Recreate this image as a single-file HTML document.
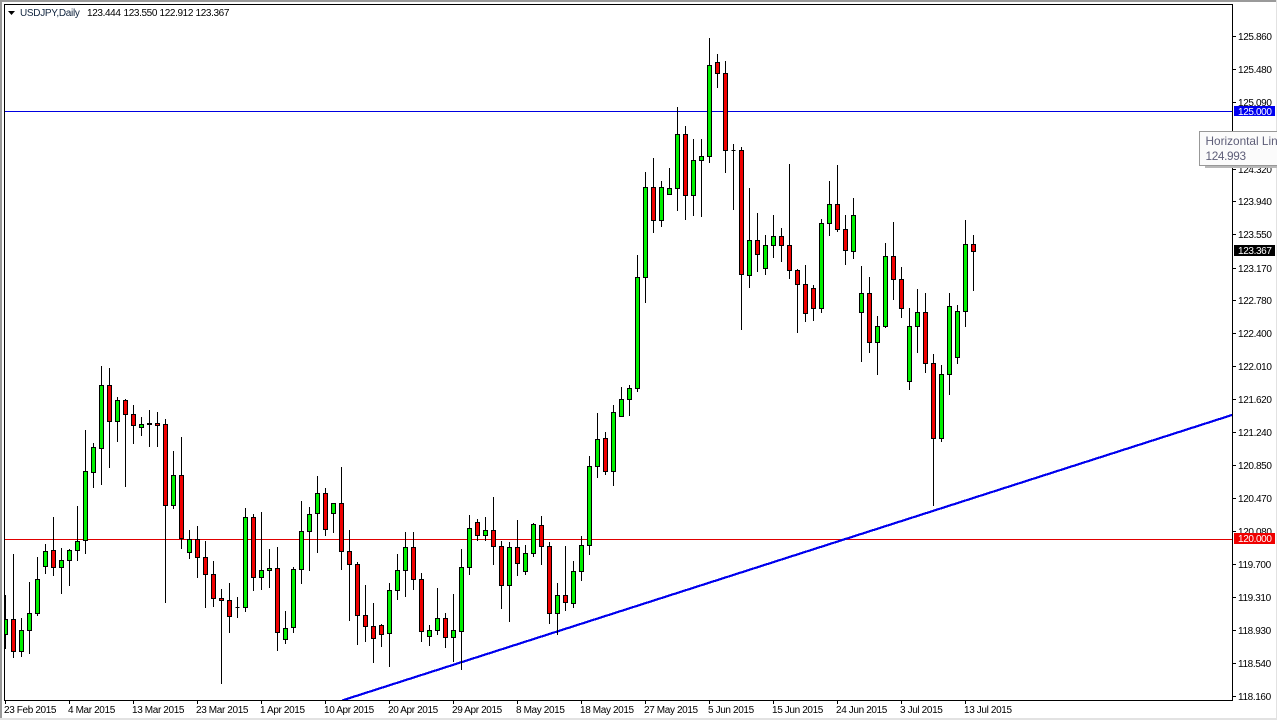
<!DOCTYPE html>
<html>
<head>
<meta charset="utf-8">
<title>USDJPY,Daily</title>
<style>
html,body{margin:0;padding:0;background:#fff;width:1277px;height:720px;overflow:hidden}
svg{display:block}
text{font-family:"Liberation Sans",sans-serif;font-size:10px;fill:#000;letter-spacing:-.37px}
</style>
</head>
<body>
<svg width="1277" height="720" viewBox="0 0 1277 720" xmlns="http://www.w3.org/2000/svg">
<rect width="1277" height="720" fill="#fff"/>
<rect x="0" y="0" width="1277" height="2" fill="#9a9a9a"/>
<rect x="0" y="0" width="2" height="720" fill="#9a9a9a"/>
<rect x="1276" y="0" width="1" height="720" fill="#e2e2e2"/>
<rect x="0" y="718" width="1277" height="2" fill="#e2e2e2"/>

<defs><clipPath id="c"><rect x="5" y="5" width="1227" height="695"/></clipPath></defs>
<g clip-path="url(#c)" shape-rendering="crispEdges">
<rect x="5" y="111" width="1227" height="1" fill="#0000e0"/>
<rect x="5" y="539" width="1227" height="1" fill="#e00000"/>
<path d="M342 700.5L1232 415" stroke="#0000ee" stroke-width="2.2" fill="none"/>
<path stroke="#000" stroke-width="1" fill="none" d="M5.5 595V649M13.5 554V658M21.5 618V657M29.5 582V654M37.5 557V616M45.5 544V574M53.5 517V576M61.5 548V594M69.5 549V586M77.5 506V561M85.5 430V554M93.5 443V488M101.5 366V485M109.5 368V468M117.5 397V442M125.5 399V487M133.5 405V444M141.5 417V436M149.5 410V447M157.5 412V447M165.5 419V603M173.5 451V509M181.5 437V549M189.5 530V559M197.5 526V578M205.5 541V608M213.5 561V607M221.5 589V684M229.5 583V633M237.5 597V618M245.5 508V612M253.5 514V591M261.5 512V590M269.5 549V588M277.5 547V651M285.5 611V644M293.5 567V633M301.5 501V584M309.5 507V571M317.5 476V553M325.5 488V536M333.5 503V533M341.5 467V570M349.5 530V621M357.5 562V645M365.5 585V642M373.5 603V663M381.5 624V647M389.5 583V667M397.5 554V600M405.5 532V597M413.5 532V590M421.5 573V642M429.5 625V646M437.5 588V635M445.5 613V648M453.5 594V662M461.5 549V670M469.5 515V575M477.5 519V541M485.5 517V541M493.5 497V565M501.5 541V609M509.5 542V622M517.5 520V576M525.5 545V575M533.5 523V557M541.5 516V565M549.5 542V624M557.5 583V635M565.5 546V611M573.5 561V608M581.5 536V581M589.5 456V555M597.5 413V478M605.5 432V475M613.5 405V486M621.5 387V416M629.5 385V416M637.5 255V392M645.5 172V303M653.5 158V233M661.5 181V227M669.5 168V195M677.5 107V211M685.5 126V220M693.5 139V216M701.5 139V217M709.5 38V163M717.5 54V88M725.5 61V173M733.5 144V210M741.5 147V330M749.5 188V288M757.5 213V272M765.5 235V275M773.5 215V258M781.5 228V262M789.5 164V279M797.5 269V333M805.5 265V322M813.5 285V321M821.5 219V313M829.5 181V236M837.5 165V232M845.5 215V265M853.5 198V259M861.5 266V362M869.5 277V353M877.5 316V375M885.5 243V328M893.5 222V300M901.5 267V318M909.5 308V390M917.5 289V353M925.5 293V373M933.5 354V506M941.5 365V442M949.5 293V395M957.5 305V364M965.5 220V327M973.5 235V291"/>
<path stroke="#000" stroke-width="1" fill="#00f000" d="M3.5 619.5h4V634.5h-4zM19.5 630.5h4V651.5h-4zM27.5 613.5h4V630.5h-4zM35.5 579.5h4V613.5h-4zM43.5 551.5h4V566.5h-4zM59.5 560.5h4V567.5h-4zM67.5 550.5h4V560.5h-4zM75.5 541.5h4V550.5h-4zM83.5 471.5h4V540.5h-4zM91.5 447.5h4V472.5h-4zM99.5 385.5h4V448.5h-4zM115.5 400.5h4V421.5h-4zM139.5 424.5h4V427.5h-4zM171.5 475.5h4V505.5h-4zM187.5 539.5h4V552.5h-4zM243.5 517.5h4V607.5h-4zM259.5 570.5h4V577.5h-4zM267.5 568.5h4V570.5h-4zM283.5 628.5h4V639.5h-4zM291.5 569.5h4V627.5h-4zM299.5 531.5h4V569.5h-4zM307.5 514.5h4V531.5h-4zM315.5 493.5h4V513.5h-4zM331.5 503.5h4V513.5h-4zM387.5 590.5h4V633.5h-4zM395.5 570.5h4V590.5h-4zM403.5 547.5h4V570.5h-4zM427.5 630.5h4V636.5h-4zM435.5 618.5h4V630.5h-4zM451.5 630.5h4V637.5h-4zM459.5 567.5h4V631.5h-4zM467.5 528.5h4V567.5h-4zM483.5 530.5h4V535.5h-4zM507.5 547.5h4V585.5h-4zM523.5 553.5h4V571.5h-4zM531.5 524.5h4V553.5h-4zM555.5 595.5h4V613.5h-4zM571.5 571.5h4V603.5h-4zM579.5 545.5h4V571.5h-4zM587.5 466.5h4V545.5h-4zM595.5 439.5h4V466.5h-4zM611.5 412.5h4V471.5h-4zM619.5 399.5h4V416.5h-4zM627.5 388.5h4V399.5h-4zM635.5 277.5h4V388.5h-4zM643.5 187.5h4V277.5h-4zM659.5 187.5h4V220.5h-4zM667.5 188.5h4V194.5h-4zM675.5 134.5h4V188.5h-4zM691.5 160.5h4V195.5h-4zM699.5 156.5h4V160.5h-4zM707.5 65.5h4V156.5h-4zM747.5 240.5h4V275.5h-4zM763.5 245.5h4V268.5h-4zM771.5 236.5h4V245.5h-4zM819.5 223.5h4V308.5h-4zM827.5 204.5h4V223.5h-4zM851.5 215.5h4V251.5h-4zM859.5 293.5h4V312.5h-4zM875.5 326.5h4V342.5h-4zM883.5 256.5h4V326.5h-4zM907.5 326.5h4V381.5h-4zM915.5 312.5h4V326.5h-4zM939.5 374.5h4V438.5h-4zM947.5 306.5h4V374.5h-4zM955.5 311.5h4V357.5h-4zM963.5 244.5h4V311.5h-4z"/>
<path stroke="#000" stroke-width="1" fill="#f00000" d="M11.5 619.5h4V651.5h-4zM51.5 550.5h4V567.5h-4zM107.5 385.5h4V421.5h-4zM123.5 400.5h4V414.5h-4zM131.5 414.5h4V425.5h-4zM147.5 423.5h4V424.5h-4zM155.5 423.5h4V425.5h-4zM163.5 424.5h4V505.5h-4zM179.5 475.5h4V538.5h-4zM195.5 539.5h4V557.5h-4zM203.5 557.5h4V574.5h-4zM211.5 574.5h4V598.5h-4zM219.5 598.5h4V600.5h-4zM227.5 600.5h4V616.5h-4zM235.5 607.5h4V607.5h-4zM251.5 517.5h4V577.5h-4zM275.5 568.5h4V632.5h-4zM323.5 493.5h4V529.5h-4zM339.5 503.5h4V551.5h-4zM347.5 551.5h4V564.5h-4zM355.5 564.5h4V615.5h-4zM363.5 615.5h4V626.5h-4zM371.5 626.5h4V638.5h-4zM379.5 625.5h4V634.5h-4zM411.5 547.5h4V579.5h-4zM419.5 579.5h4V631.5h-4zM443.5 618.5h4V637.5h-4zM475.5 522.5h4V535.5h-4zM491.5 530.5h4V546.5h-4zM499.5 546.5h4V585.5h-4zM515.5 547.5h4V563.5h-4zM539.5 525.5h4V546.5h-4zM547.5 546.5h4V613.5h-4zM563.5 595.5h4V602.5h-4zM603.5 438.5h4V471.5h-4zM651.5 187.5h4V220.5h-4zM683.5 134.5h4V195.5h-4zM715.5 62.5h4V73.5h-4zM723.5 73.5h4V150.5h-4zM731.5 150.5h4V150.5h-4zM739.5 150.5h4V274.5h-4zM755.5 240.5h4V254.5h-4zM779.5 236.5h4V245.5h-4zM787.5 245.5h4V270.5h-4zM795.5 270.5h4V284.5h-4zM803.5 284.5h4V313.5h-4zM811.5 288.5h4V308.5h-4zM835.5 204.5h4V229.5h-4zM843.5 229.5h4V250.5h-4zM867.5 293.5h4V342.5h-4zM891.5 256.5h4V279.5h-4zM899.5 279.5h4V308.5h-4zM923.5 312.5h4V363.5h-4zM931.5 363.5h4V438.5h-4zM971.5 244.5h4V251.5h-4z"/>
</g>

<rect x="4.5" y="4.5" width="1228" height="696" fill="none" stroke="#000" stroke-width="1" shape-rendering="crispEdges"/>

<path d="M8 11h7l-3.5 4z" fill="#000"/>
<text x="20" y="16" style="fill:#10243e;letter-spacing:-.3px">USDJPY,Daily</text>
<text x="87" y="16">123.444</text>
<text x="123.5" y="16">123.550</text>
<text x="159.5" y="16">122.912</text>
<text x="195.5" y="16">123.367</text>

<path shape-rendering="crispEdges" stroke="#000" stroke-width="1" fill="none" d="M1233 36.5h3M1233 69.5h3M1233 102.5h3M1233 169.5h3M1233 201.5h3M1233 234.5h3M1233 268.5h3M1233 300.5h3M1233 333.5h3M1233 366.5h3M1233 399.5h3M1233 432.5h3M1233 465.5h3M1233 498.5h3M1233 531.5h3M1233 564.5h3M1233 597.5h3M1233 630.5h3M1233 663.5h3M1233 696.5h3"/>
<text x="1238" y="40">125.860</text>
<text x="1238" y="73">125.480</text>
<text x="1238" y="106">125.090</text>
<text x="1238" y="173">124.320</text>
<text x="1238" y="205">123.940</text>
<text x="1238" y="238">123.550</text>
<text x="1238" y="272">123.170</text>
<text x="1238" y="304">122.780</text>
<text x="1238" y="337">122.400</text>
<text x="1238" y="370">122.010</text>
<text x="1238" y="403">121.620</text>
<text x="1238" y="436">121.240</text>
<text x="1238" y="469">120.850</text>
<text x="1238" y="502">120.470</text>
<text x="1238" y="535">120.080</text>
<text x="1238" y="568">119.700</text>
<text x="1238" y="601">119.310</text>
<text x="1238" y="634">118.930</text>
<text x="1238" y="667">118.540</text>
<text x="1238" y="700">118.160</text>

<rect x="1234" y="106" width="41" height="10" fill="#0000f0"/>
<text x="1238" y="115" style="fill:#fff">125.000</text>
<rect x="1234" y="245" width="41" height="11" fill="#000"/>
<text x="1238" y="254" style="fill:#fff">123.367</text>
<rect x="1234" y="533" width="41" height="11" fill="#f00000"/>
<text x="1238" y="542" style="fill:#fff">120.000</text>

<rect x="1205" y="165" width="72" height="3" fill="#b8b8b8"/>
<rect x="1199.5" y="131.5" width="80" height="34" fill="#fbfbfb" stroke="#989898" stroke-width="1" shape-rendering="crispEdges"/>
<text x="1205.5" y="145" style="font-size:11.8px;fill:#5e5e78;letter-spacing:0">Horizontal Line</text>
<text x="1205.5" y="160" style="font-size:11.8px;fill:#5e5e78;letter-spacing:-.35px">124.993</text>

<path shape-rendering="crispEdges" stroke="#000" stroke-width="1" fill="none" d="M5.5 701v3M69.5 701v3M133.5 701v3M197.5 701v3M261.5 701v3M325.5 701v3M389.5 701v3M453.5 701v3M517.5 701v3M581.5 701v3M645.5 701v3M709.5 701v3M773.5 701v3M837.5 701v3M901.5 701v3M965.5 701v3"/>
<text x="4" y="713">23 Feb 2015</text>
<text x="68" y="713">4 Mar 2015</text>
<text x="132" y="713">13 Mar 2015</text>
<text x="196" y="713">23 Mar 2015</text>
<text x="260" y="713">1 Apr 2015</text>
<text x="324" y="713">10 Apr 2015</text>
<text x="388" y="713">20 Apr 2015</text>
<text x="452" y="713">29 Apr 2015</text>
<text x="516" y="713">8 May 2015</text>
<text x="580" y="713">18 May 2015</text>
<text x="644" y="713">27 May 2015</text>
<text x="708" y="713">5 Jun 2015</text>
<text x="772" y="713">15 Jun 2015</text>
<text x="836" y="713">24 Jun 2015</text>
<text x="900" y="713">3 Jul 2015</text>
<text x="964" y="713">13 Jul 2015</text>
</svg>
</body>
</html>
